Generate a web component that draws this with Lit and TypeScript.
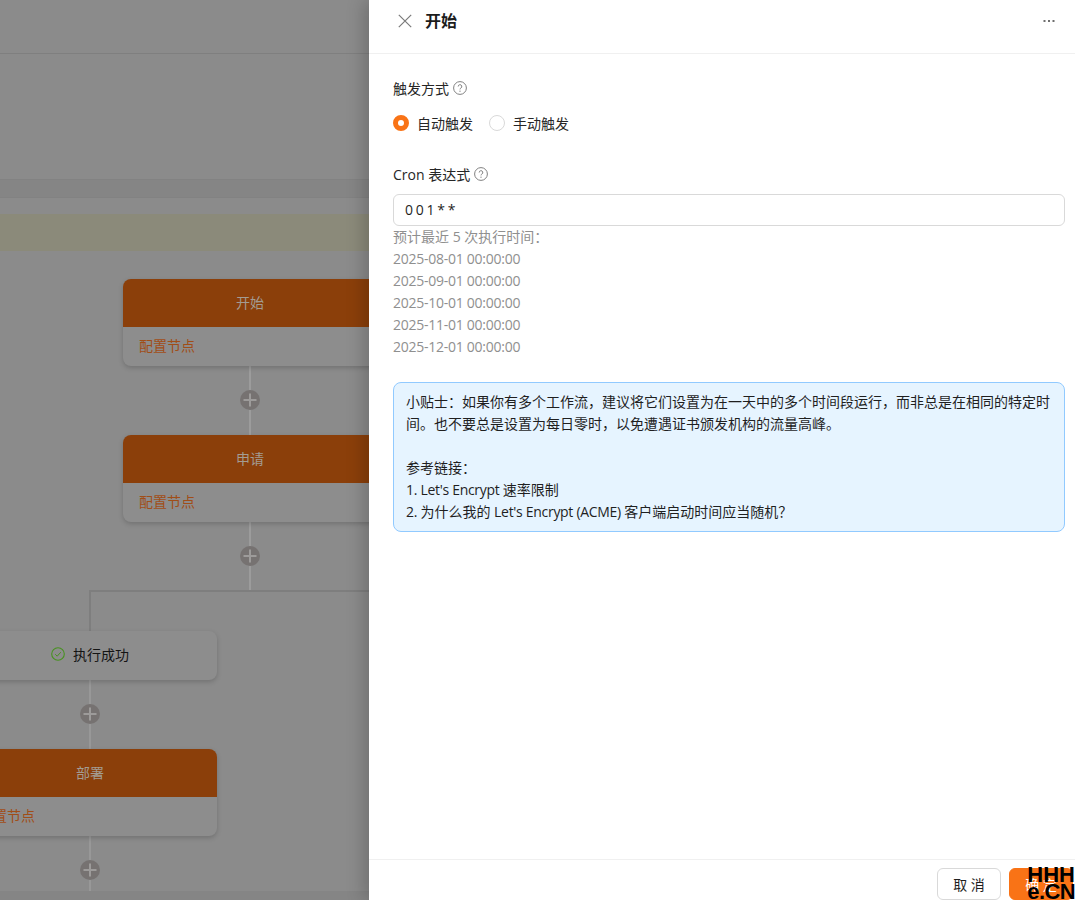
import { LitElement, html, css, svg, unsafeCSS } from "lit";
import { customElement } from "lit/decorators.js";

const FONT = unsafeCSS(`"Open Sans", "Noto Sans CJK SC", "Noto Sans", sans-serif`);

const helpIcon = html`<svg class="help" viewBox="0 0 14 14" width="14" height="14" aria-hidden="true">
  <circle cx="7" cy="7" r="6.4" fill="none" stroke="#808080" stroke-width="1"></circle>
  <path d="M5.2 5.5a1.8 1.8 0 1 1 2.7 1.55c-.6.35-.9.7-.9 1.35" fill="none" stroke="#808080" stroke-width="1"></path>
  <circle cx="7" cy="10.2" r=".65" fill="#808080"></circle>
</svg>`;

const plusDisc = svg`<circle cx="10" cy="10" r="10" fill="#767271"></circle>
  <path d="M3.5 10h13M10 3.5v13" stroke="#9d9b9a" stroke-width="2"></path>`;

type FlowNode = { x: number; y: number; title?: string; link?: string; ok?: string };

const nodes: FlowNode[] = [
  { x: 123, y: 279, title: "开始", link: "配置节点" },
  { x: 123, y: 435, title: "申请", link: "配置节点" },
  { x: -37, y: 631, ok: "执行成功" },
  { x: -37, y: 749, title: "部署", link: "配置节点" },
];

const adds = [
  { x: 240, y: 390 },
  { x: 240, y: 546 },
  { x: 80, y: 704 },
  { x: 80, y: 860 },
];

const wires = [
  { x: 249, y: 366, w: 2, h: 69, c: "#9c9c9c" },
  { x: 249, y: 522, w: 2, h: 69, c: "#9c9c9c" },
  { x: 89, y: 590, w: 300, h: 2, c: "#7e7e7e" },
  { x: 89, y: 590, w: 2, h: 41, c: "#7e7e7e" },
  { x: 89, y: 680, w: 2, h: 69, c: "#989898" },
  { x: 89, y: 836, w: 2, h: 55, c: "#989898" },
];

@customElement("app-root")
export class AppRoot extends LitElement {
  static styles = css`
    :host {
      display: block;
      position: relative;
      width: 1075px;
      height: 900px;
      overflow: hidden;
      font-family: ${FONT};
      font-size: 14px;
      color: #1f1f1f;
      background: #8b8b8b;
    }
    * { box-sizing: border-box; }

    .page {
      display: flex;
      flex-direction: column;
      width: 369px;
      height: 900px;
    }
    .topbar { height: 54px; flex: none; border-bottom: 1px solid #7f7f7f; }
    .spacer-a { height: 125px; flex: none; }
    .band {
      height: 19px;
      flex: none;
      background: #858585;
      border-top: 1px solid #828282;
      border-bottom: 1px solid #828282;
    }
    .spacer-b { height: 16px; flex: none; }
    .alert { height: 37px; flex: none; background: #8b8a7a; }
    .rest { flex: 1; }
    .foot { height: 9px; flex: none; background: #858585; }

    .canvas { position: absolute; left: 0; top: 0; width: 369px; height: 900px; overflow: hidden; }
    .wire { position: absolute; }
    .add { position: absolute; width: 20px; height: 20px; display: block; }
    .node {
      position: absolute;
      width: 254px;
      border-radius: 8px;
      background: #8d8d8d;
      box-shadow: 0 2px 5px rgba(0, 0, 0, 0.18);
      overflow: hidden;
    }
    .head {
      height: 48px;
      padding-bottom: 2px;
      display: flex;
      align-items: center;
      justify-content: center;
      background: #8b3f0a;
      color: #a39c92;
      font-size: 14px;
    }
    .body {
      height: 39px;
      padding: 0 16px 3px;
      display: flex;
      align-items: center;
      color: #a04e18;
      font-size: 14px;
    }
    .node.ok {
      height: 49px;
      padding-bottom: 3px;
      display: flex;
      align-items: center;
      justify-content: center;
      gap: 8px;
      color: #141414;
    }
    .node.ok svg { margin-left: 0; }

    .drawer {
      position: absolute;
      left: 369px;
      top: 0;
      width: 720px;
      height: 900px;
      background: #fff;
      display: flex;
      flex-direction: column;
      box-shadow: -6px 0 16px rgba(0, 0, 0, 0.18);
    }
    .d-head {
      height: 54px;
      flex: none;
      display: flex;
      align-items: center;
      padding: 0 24px 12px 29px;
      border-bottom: 1px solid #f0f0f0;
    }
    .d-title { font-size: 16px; font-weight: 700; color: #1c1c1c; margin: 0 0 2px 13px; flex: 1; }
    .more { margin-right: 10px; display: block; }
    .d-body { flex: 1; padding: 23px 24px 0; }
    .label { display: flex; align-items: center; gap: 4px; height: 22px; color: #262626; }
    .radios { display: flex; align-items: center; margin-top: 13px; height: 22px; }
    .radio {
      width: 16px;
      height: 16px;
      border-radius: 50%;
      border: 1px solid #d9d9d9;
      flex: none;
    }
    .radio.on { border: 5px solid #f97316; background: #fff; }
    .radio-text { margin: 0 16px 0 8px; color: #262626; }
    .cron { margin-top: 29px; }
    .cron-text { white-space: pre; }
    .input {
      margin-top: 9px;
      height: 32px;
      border: 1px solid #d9d9d9;
      border-radius: 6px;
      padding: 0 11px 2px;
      display: flex;
      align-items: center;
      color: #1f1f1f;
      letter-spacing: -0.45px;
      white-space: pre;
    }
    .hints { color: #8f8f8f; line-height: 22px; }
    .date { letter-spacing: -0.26px; }
    .tip {
      margin-top: 24px;
      padding: 8px 12px 4px 12px;
      border: 1px solid #91caff;
      border-radius: 8px;
      background: #e6f4ff;
      line-height: 22px;
      color: #1f1f1f;
      height: 150px;
    }
    .tip p { margin: 0; }
    .tip .gap { height: 22px; }
    .lat { letter-spacing: -0.3px; }
    .d-foot {
      height: 41px;
      flex: none;
      border-top: 1px solid #f0f0f0;
      padding: 8px 16px 0;
      display: flex;
      justify-content: flex-end;
      gap: 8px;
    }
    .btn {
      width: 64px;
      height: 32px;
      border-radius: 6px;
      display: flex;
      align-items: center;
      justify-content: center;
      font-size: 14px;
      background: #fff;
      border: 1px solid #d9d9d9;
      color: #1f1f1f;
    }
    .btn.primary { background: #f97316; border-color: #f97316; color: #fff; }

    .mark {
      position: absolute;
      right: 0;
      bottom: 0;
      width: 50px;
      font-family: "Liberation Sans", sans-serif;
      font-weight: 700;
      font-size: 22px;
      line-height: 17px;
      color: #000;
      text-align: right;
      white-space: nowrap;
    }
    .mark div { height: 17px; }
    .mark .low { letter-spacing: -0.6px; }
  `;

  render() {
    return html`
      <div class="page">
        <div class="topbar"></div>
        <div class="spacer-a"></div>
        <div class="band"></div>
        <div class="spacer-b"></div>
        <div class="alert"></div>
        <div class="rest"></div>
        <div class="foot"></div>
      </div>

      <div class="canvas">
        ${wires.map(
          (w) => html`<div
            class="wire"
            style="left:${w.x}px;top:${w.y}px;width:${w.w}px;height:${w.h}px;background:${w.c}"
          ></div>`
        )}
        ${adds.map(
          (a) => html`<svg class="add" viewBox="0 0 20 20" style="left:${a.x}px;top:${a.y}px">${plusDisc}</svg>`
        )}
        ${nodes.map((n) =>
          n.ok
            ? html`<div class="node ok" style="left:${n.x}px;top:${n.y}px">
                <svg viewBox="0 0 14 14" width="14" height="14">
                  <circle cx="7" cy="7" r="6.3" fill="none" stroke="#47921f" stroke-width="1.1"></circle>
                  <path d="M4.2 7.2l2 2 3.6-4" fill="none" stroke="#47921f" stroke-width="1"></path>
                </svg>
                <span>${n.ok}</span>
              </div>`
            : html`<div class="node" style="left:${n.x}px;top:${n.y}px">
                <div class="head">${n.title}</div>
                <div class="body">${n.link}</div>
              </div>`
        )}
      </div>

      <div class="drawer">
        <div class="d-head">
          <svg viewBox="0 0 14 14" width="14" height="14">
            <path d="M.8.8l12.4 12.4M13.2.8L.8 13.2" stroke="#7a7a7a" stroke-width="1.2" fill="none"></path>
          </svg>
          <div class="d-title">开始</div>
          <svg class="more" viewBox="0 0 12 4" width="12" height="4">
            <rect x="0.5" y="1" width="2" height="2" fill="#6e6e6e"></rect>
            <rect x="5" y="1" width="2" height="2" fill="#6e6e6e"></rect>
            <rect x="9.5" y="1" width="2" height="2" fill="#6e6e6e"></rect>
          </svg>
        </div>
        <div class="d-body">
          <div class="label">触发方式 ${helpIcon}</div>
          <div class="radios">
            <span class="radio on"></span><span class="radio-text">自动触发</span>
            <span class="radio"></span><span class="radio-text">手动触发</span>
          </div>
          <div class="label cron"><span class="cron-text">Cron 表达式</span>${helpIcon}</div>
          <div class="input">0 0 1 * *</div>
          <div class="hints">
            <div>预计最近 5 次执行时间：</div>
            <div class="date">2025-08-01 00:00:00</div>
            <div class="date">2025-09-01 00:00:00</div>
            <div class="date">2025-10-01 00:00:00</div>
            <div class="date">2025-11-01 00:00:00</div>
            <div class="date">2025-12-01 00:00:00</div>
          </div>
          <div class="tip">
            <p>小贴士：如果你有多个工作流，建议将它们设置为在一天中的多个时间段运行，而非总是在相同的特定时间。也不要总是设置为每日零时，以免遭遇证书颁发机构的流量高峰。</p>
            <div class="gap"></div>
            <p>参考链接：</p>
            <p><span class="lat">1. Let's Encrypt </span>速率限制</p>
            <p><span class="lat">2. </span>为什么我的 <span class="lat">Let's Encrypt (ACME) </span>客户端启动时间应当随机？</p>
          </div>
        </div>
        <div class="d-foot">
          <div class="btn">取 消</div>
          <div class="btn primary">确 定</div>
        </div>
      </div>

      <div class="mark"><div>HHH</div><div class="low">e.CN</div></div>
    `;
  }
}
